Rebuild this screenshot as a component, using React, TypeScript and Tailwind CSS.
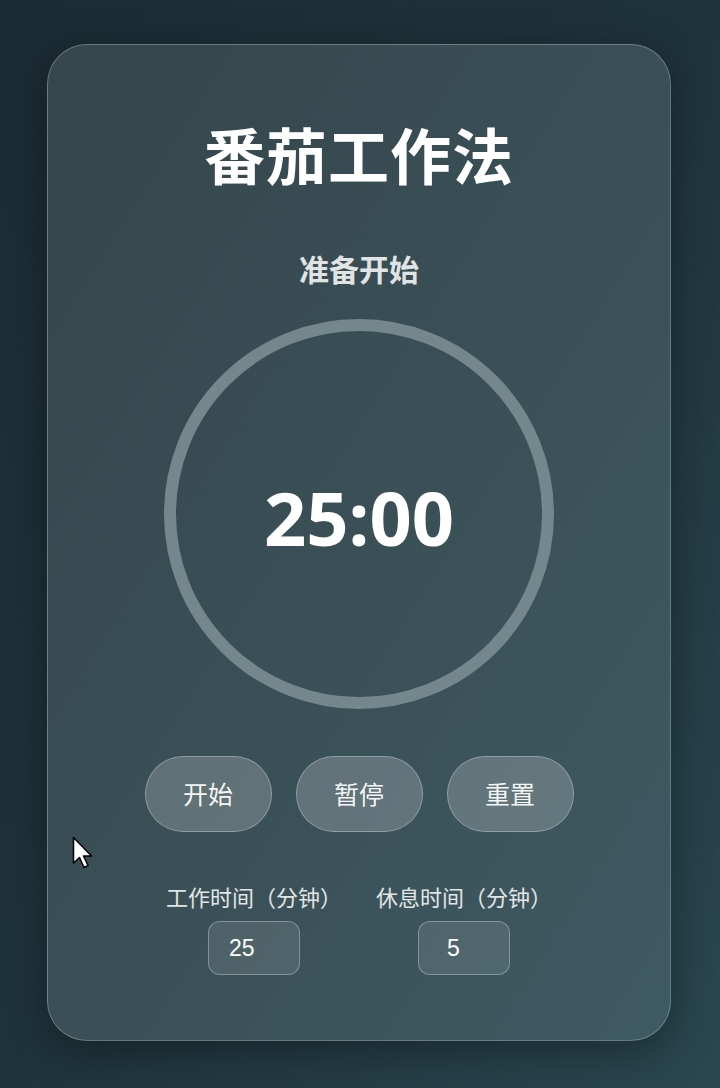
import React, { useState } from 'react';

const cjk = 'font-["Noto_Sans_CJK_SC","Noto_Sans",sans-serif]';

export default function App() {
  const [work, setWork] = useState('25');
  const [rest, setRest] = useState('5');

  return (
    <div className="relative min-h-[1088px] w-full overflow-hidden bg-gradient-to-br from-[#1b2b33] via-[#1f333b] to-[#2a4750] pt-[44px]">
      <div
        className={`ml-[47px] flex w-[624px] flex-col items-center rounded-[40px] border border-white/25 bg-gradient-to-br from-[#35464c] via-[#3a4f56] to-[#3e5a63] pt-[78px] pb-[65px] shadow-[0_10px_40px_rgba(0,0,0,0.35)] ${cjk}`}
      >
        {/* Title */}
        <h1 className="h-[62px] text-[61px] font-bold leading-[62px] tracking-[1px] text-white">番茄工作法</h1>

        {/* Status */}
        <div className="mt-[68px] h-[30px] text-[30px] font-semibold leading-[30px] text-white/85">准备开始</div>

        {/* Timer ring */}
        <div className="mt-[36px] flex h-[390px] w-[390px] items-center justify-center rounded-full border-[12px] border-[#74878c]">
          <span className='pt-[8px] font-["Noto_Sans","Open_Sans",sans-serif] text-[74px] font-bold leading-none text-white'>25:00</span>
        </div>

        {/* Controls */}
        <div className="mt-[47px] flex gap-[24px]">
          {['开始', '暂停', '重置'].map((label) => (
            <button
              key={label}
              className="h-[76px] w-[127px] rounded-full border border-white/30 bg-white/20 text-[25px] text-white/95"
            >
              {label}
            </button>
          ))}
        </div>

        {/* Settings */}
        <div className="mt-[51px] flex gap-[34px]">
          <div className="flex flex-col items-center">
            <label className="h-[26px] text-[22px] leading-[26px] text-white/85">工作时间（分钟）</label>
            <input
              value={work}
              onChange={(e) => setWork(e.target.value)}
              className='mt-[12px] h-[54px] w-[92px] rounded-[12px] border border-white/30 bg-white/10 pl-[20px] font-["Liberation_Sans",sans-serif] text-[23px] text-white outline-none'
            />
          </div>
          <div className="flex flex-col items-center">
            <label className="h-[26px] text-[22px] leading-[26px] text-white/85">休息时间（分钟）</label>
            <input
              value={rest}
              onChange={(e) => setRest(e.target.value)}
              className='mt-[12px] h-[54px] w-[92px] rounded-[12px] border border-white/30 bg-white/10 pl-[28px] font-["Liberation_Sans",sans-serif] text-[23px] text-white outline-none'
            />
          </div>
        </div>
      </div>

      {/* mouse pointer */}
      <svg className="absolute left-[72px] top-[836px]" width="24" height="36" viewBox="0 0 24 36">
        <path d="M1.5 1.5 L1.5 27 L7.5 21.5 L12 31.5 L16 29.5 L11.5 20 L19.5 20 Z" fill="#fff" stroke="#000" strokeWidth="1.5" strokeLinejoin="round" />
      </svg>
    </div>
  );
}
